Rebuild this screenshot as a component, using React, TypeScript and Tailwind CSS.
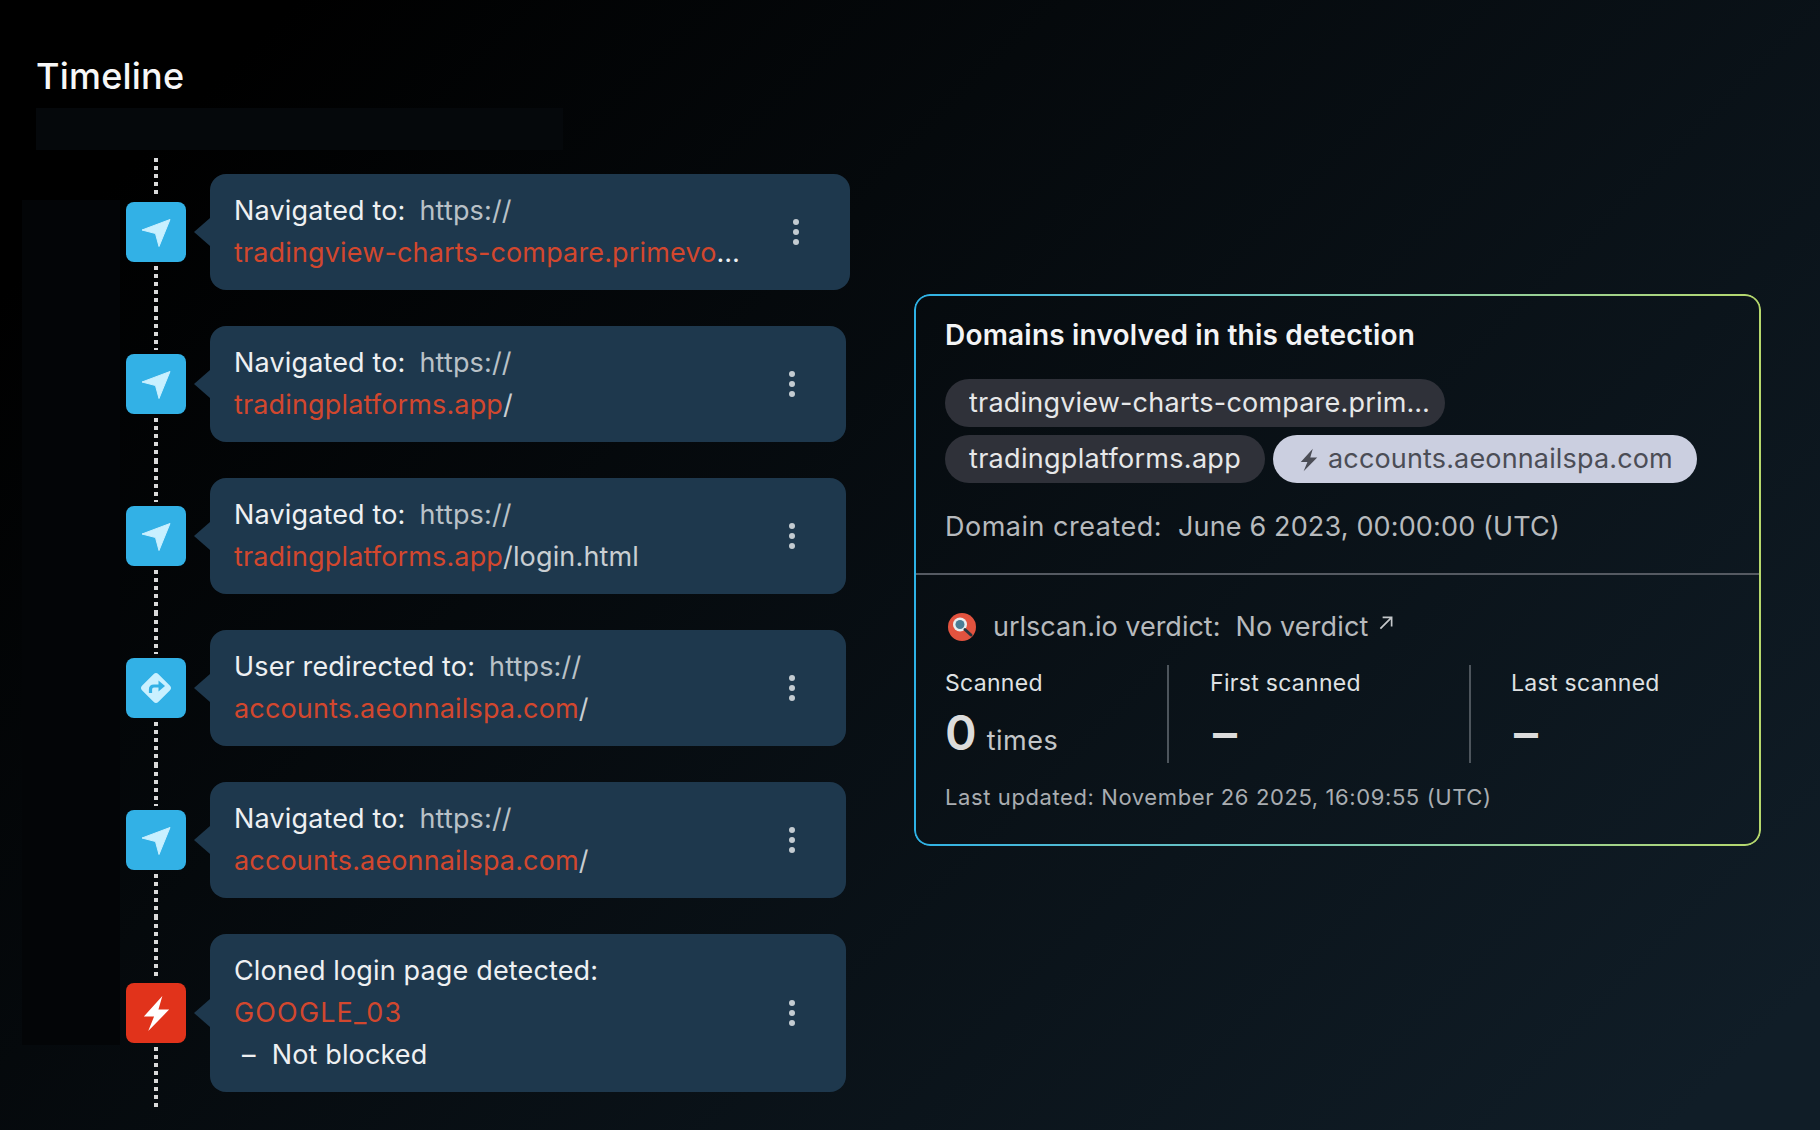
import type { ReactNode } from 'react';

type Kind = 'nav' | 'redirect' | 'bolt';

interface Step {
  kind: Kind;
  label: string;
  scheme?: string;
  host: string;
  path?: string;
  note?: string;
}

const steps: Step[] = [
  { kind: 'nav', label: 'Navigated to:', scheme: 'https://', host: 'tradingview-charts-compare.primevolumetrade.com', path: '/' },
  { kind: 'nav', label: 'Navigated to:', scheme: 'https://', host: 'tradingplatforms.app', path: '/' },
  { kind: 'nav', label: 'Navigated to:', scheme: 'https://', host: 'tradingplatforms.app', path: '/login.html' },
  { kind: 'redirect', label: 'User redirected to:', scheme: 'https://', host: 'accounts.aeonnailspa.com', path: '/' },
  { kind: 'nav', label: 'Navigated to:', scheme: 'https://', host: 'accounts.aeonnailspa.com', path: '/' },
  { kind: 'bolt', label: 'Cloned login page detected:', host: 'GOOGLE_03', note: 'Not blocked' },
];

function NavIcon() {
  return (
    <svg width="30" height="30" viewBox="0 0 30 30">
      <path d="M1 13 L29 2.5 L18 29.5 L14.5 16.5 Z" fill="#c9f0ff" stroke="#c9f0ff" strokeWidth="1" strokeLinejoin="round" />
    </svg>
  );
}

function RedirectIcon() {
  return (
    <svg width="36" height="36" viewBox="0 0 36 36">
      <rect x="6.5" y="6.5" width="23" height="23" rx="3.5" transform="rotate(45 18 18)" fill="#c9f0ff" />
      <path d="M12.5 23 V19.5 Q12.5 16 16 16 H22" fill="none" stroke="#32b1e6" strokeWidth="3.2" />
      <path d="M20.5 10.5 L27 16 L20.5 21.5 Z" fill="#32b1e6" />
    </svg>
  );
}

function BoltIcon({ color, size }: { color: string; size: number }) {
  return (
    <svg width={size} height={size} viewBox="0 0 30 38" fill={color}>
      <path d="M21 1 L2 22 L12.5 22 L6.5 37 L28 15 L17 15 Z" />
    </svg>
  );
}

function StepIcon({ kind }: { kind: Kind }) {
  if (kind === 'bolt') {
    return (
      <div className="flex h-[60px] w-[60px] shrink-0 items-center justify-center rounded-lg bg-[#e1331b]">
        <BoltIcon color="#ffffff" size={37} />
      </div>
    );
  }
  return (
    <div className="flex h-[60px] w-[60px] shrink-0 items-center justify-center rounded-lg bg-[#32b1e6]">
      {kind === 'nav' ? <NavIcon /> : <RedirectIcon />}
    </div>
  );
}

function Dots() {
  return (
    <div className="flex shrink-0 flex-col gap-1">
      <span className="h-1.5 w-1.5 rounded-full bg-[#c3cbd1]" />
      <span className="h-1.5 w-1.5 rounded-full bg-[#c3cbd1]" />
      <span className="h-1.5 w-1.5 rounded-full bg-[#c3cbd1]" />
    </div>
  );
}

function DottedSegment({ inset }: { inset?: boolean }) {
  return (
    <div
      className={`w-1 flex-1 bg-[repeating-linear-gradient(to_bottom,#d9d9d9_0_4px,transparent_4px_8px)] ${inset ? 'bg-[position:0_2px] [clip-path:inset(2px_0_0_0)]' : ''}`}
    />
  );
}

function TimelineRow({ step, first }: { step: Step; first: boolean }) {
  return (
    <div className="flex items-stretch">
      <div className="flex w-[60px] shrink-0 flex-col items-center gap-1">
        <DottedSegment inset={first} />
        <StepIcon kind={step.kind} />
        <DottedSegment />
      </div>
      <div className="ml-2 flex items-center py-[18px]">
        <div className="h-0 w-0 border-y-[14px] border-r-[16px] border-y-transparent border-r-[#1e384d]" />
        <div className={`flex items-center justify-between rounded-2xl bg-[#1e384d] py-4 pl-6 pr-[51px] ${first ? 'w-[640px]' : 'w-[636px]'}`}>
          <div className="w-[510px] text-[27px] leading-[42px] tracking-[0.15px] text-[#eef0f2]">
            <div>
              {step.label}
              {step.scheme && <span className="ml-[14px] text-[#b9c1c7]">{step.scheme}</span>}
            </div>
            <div className="truncate">
              <span className={step.note ? 'tracking-[1.15px] text-[#d2472e]' : 'text-[#d2472e]'}>{step.host}</span>
              {step.path && <span className="text-[#c9ced2]">{step.path}</span>}
            </div>
            {step.note && <div className="pl-2">–<span className="ml-4">{step.note}</span></div>}
          </div>
          <Dots />
        </div>
      </div>
    </div>
  );
}

function Chip({ children, light }: { children: ReactNode; light?: boolean }) {
  return (
    <div className={`flex h-12 items-center gap-[7px] rounded-full px-6 pt-px text-[27px] ${light ? 'bg-[#cbcfe0] tracking-[0.15px] text-[#4b4d56]' : 'bg-[#2f3139] tracking-[0.3px] text-[#e6e7e8]'}`}>
      {children}
    </div>
  );
}

function Stat({ label, children, className }: { label: string; children: ReactNode; className: string }) {
  return (
    <div className={`h-[98px] ${className}`}>
      <div className="mt-[4px] text-[23px] leading-7 tracking-[0.3px] text-[#dfe1e3]">{label}</div>
      <div className="mt-[7px] flex items-baseline text-[#dcdcdc]">{children}</div>
    </div>
  );
}

export default function App() {
  return (
    <div className="relative h-[1130px] w-[1820px] overflow-hidden bg-[linear-gradient(135deg,#000000_10%,#101d27_95%)] font-['Inter',sans-serif]">
      <div className="absolute left-[22px] top-[200px] h-[845px] w-[98px] bg-[#030507]" />
      <div className="relative flex pl-9">
        <div className="w-[814px] shrink-0">
          <h1 className="flex h-[108px] items-end pb-3 text-[36px] font-medium leading-10 tracking-[0.2px] text-[#f7f7f7]">Timeline</h1>
          <div className="h-[42px] w-[527px] bg-[#05080b]" />
          <div className="mt-1.5 pl-[90px]">
            {steps.map((step, idx) => (
              <TimelineRow key={idx} step={step} first={idx === 0} />
            ))}
          </div>
        </div>
        <div className="relative ml-16 mt-[294px] h-[552px] w-[847px] shrink-0 rounded-2xl">
          <div className="absolute inset-0 rounded-2xl bg-gradient-to-r from-[#2db2e6] to-[#b6d86c] p-[2px] [mask:linear-gradient(#000_0_0)_content-box_exclude,linear-gradient(#000_0_0)]" />
          <div className="h-[281px] border-b-2 border-[#555a62] px-[31px] pt-[25px]">
            <h2 className="text-[28px] font-semibold leading-8 tracking-[0.2px] text-[#f3f4f5]">Domains involved in this detection</h2>
            <div className="mt-[28px] flex flex-col gap-2">
              <div className="flex">
                <div className="w-[500px]">
                  <div className="flex h-12 items-center rounded-full bg-[#2f3139] pl-6 pr-2 pt-px text-[27px] tracking-[0.2px] text-[#e6e7e8]">
                    <span className="truncate">tradingview-charts-compare.primevolumetrade.com</span>
                  </div>
                </div>
              </div>
              <div className="flex gap-2">
                <Chip>tradingplatforms.app</Chip>
                <Chip light><BoltIcon color="#4b4d56" size={24} />accounts.aeonnailspa.com</Chip>
              </div>
            </div>
            <div className="mt-[26px] text-[27px] leading-9 tracking-[0.15px] text-[#b7babd]">
              <span className="tracking-[0.5px]">Domain created:</span><span className="ml-4">June 6 2023, 00:00:00 (UTC)</span>
            </div>
          </div>
          <div className="px-[31px] pt-[34px]">
            <div className="flex h-9 items-center text-[27px] tracking-[0.15px] text-[#b7babd]">
              <svg width="28" height="28" viewBox="0 0 28 28" className="ml-[3px] mr-[17px] shrink-0">
                <circle cx="14" cy="14" r="14" fill="#e2533f" />
                <circle cx="12" cy="11.5" r="7" fill="#e8eef0" />
                <circle cx="12" cy="11.5" r="4.5" fill="#4a7d95" />
                <path d="M17 16.5 L23 22" stroke="#26343c" strokeWidth="3" strokeLinecap="round" />
              </svg>
              <span className="tracking-[0px]">urlscan.io verdict:</span><span className="ml-[15px]">No verdict</span>
              <svg width="18" height="18" viewBox="0 0 16 16" fill="none" stroke="#c4c7ca" strokeWidth="1.5" className="mb-2 ml-2">
                <path d="M3 13 L13 3 M5 3 H13 V11" />
              </svg>
            </div>
            <div className="mt-[20px] flex">
              <Stat label="Scanned" className="w-[224px] border-r-2 border-[#4d555c]">
                <span className="text-[48px] font-semibold leading-[58px]">0</span>
                <span className="ml-[10px] text-[27px] tracking-[0.5px] text-[#c3c6c8]">times</span>
              </Stat>
              <Stat label="First scanned" className="w-[302px] border-r-2 border-[#4d555c] pl-[41px]">
                <span className="ml-[3px] text-[48px] font-semibold leading-[58px]">–</span>
              </Stat>
              <Stat label="Last scanned" className="pl-[40px]">
                <span className="ml-[3px] text-[48px] font-semibold leading-[58px]">–</span>
              </Stat>
            </div>
            <div className="mt-[20px] text-[22px] leading-7 tracking-[0.6px] text-[#a9adb1]">
              Last updated: November 26 2025, 16:09:55 (UTC)
            </div>
          </div>
        </div>
      </div>
    </div>
  );
}
